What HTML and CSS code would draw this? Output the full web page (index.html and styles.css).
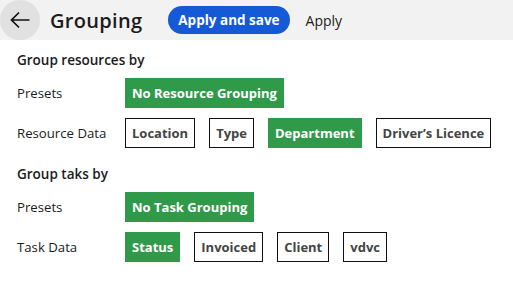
FILE: index.html
```html
<!DOCTYPE html>
<html lang="en">
<head>
  <meta charset="UTF-8">
  <title>Grouping</title>
  <link rel="stylesheet" href="styles.css">
</head>
<body>
  <div class="header">
    <button class="back" aria-label="Back">
      <svg width="22" height="22" viewBox="0 0 22 22">
        <path d="M20.5 11H2.5M10 3.5L2.5 11l7.5 7.5" fill="none" stroke="#111" stroke-width="1.7"/>
      </svg>
    </button>
    <h1>Grouping</h1>
    <button class="btn-primary">Apply and save</button>
    <button class="btn-text">Apply</button>
  </div>

  <div class="content">
    <div class="section">
      <h2>Group resources by</h2>
      <div class="row">
        <div class="row-label">Presets</div>
        <div class="chips">
          <span class="chip active">No Resource Grouping</span>
        </div>
      </div>
      <div class="row">
        <div class="row-label">Resource Data</div>
        <div class="chips">
          <span class="chip">Location</span>
          <span class="chip">Type</span>
          <span class="chip active">Department</span>
          <span class="chip">Driver’s Licence</span>
        </div>
      </div>
    </div>

    <div class="section">
      <h2>Group taks by</h2>
      <div class="row">
        <div class="row-label">Presets</div>
        <div class="chips">
          <span class="chip active">No Task Grouping</span>
        </div>
      </div>
      <div class="row">
        <div class="row-label">Task Data</div>
        <div class="chips">
          <span class="chip active">Status</span>
          <span class="chip">Invoiced</span>
          <span class="chip">Client</span>
          <span class="chip">vdvc</span>
        </div>
      </div>
    </div>
  </div>
</body>
</html>
```

FILE: styles.css
```css
:root {
  --header-bg: #f2f2f2;
  --circle-bg: #e1e1e1;
  --blue: #1559d6;
  --green: #2f9a49;
  --text-color: #1b1b1b;
  --chip-text: #444444;
}

body {
  margin: 0;
  font-family: 'Open Sans', 'Noto Sans', sans-serif;
  color: var(--text-color);
  background: #ffffff;
}

.header {
  height: 40px;
  background: var(--header-bg);
  display: flex;
  align-items: center;
}

.back {
  width: 40px;
  height: 40px;
  border: none;
  border-radius: 50%;
  background: var(--circle-bg);
  padding: 0;
  display: flex;
  align-items: center;
  justify-content: center;
}

.header h1 {
  font-size: 20px;
  font-weight: 600;
  margin: 0 0 0 10px;
  letter-spacing: 0.3px;
}

.btn-primary {
  margin-left: 26px;
  height: 28px;
  padding: 0 10px;
  border: none;
  border-radius: 14px;
  background: var(--blue);
  color: #ffffff;
  font-family: inherit;
  font-size: 13.5px;
  font-weight: 700;
}

.btn-text {
  margin-left: 6px;
  height: 28px;
  padding: 0 10px;
  border: none;
  background: none;
  color: var(--text-color);
  font-family: inherit;
  font-size: 14px;
}

.content {
  padding: 10px 17px;
}

.section + .section {
  margin-top: 16px;
}

.section h2 {
  font-size: 13.5px;
  font-weight: 600;
  line-height: 20px;
  margin: 0 0 8px 0;
}

.row {
  display: flex;
  align-items: center;
  margin-bottom: 10px;
}

.row-label {
  width: 108px;
  flex-shrink: 0;
  font-size: 13.2px;
}

.chips {
  display: flex;
  gap: 14px;
}

.chip {
  height: 30px;
  flex-shrink: 0;
  box-sizing: border-box;
  padding: 0 6px;
  display: inline-flex;
  align-items: center;
  white-space: nowrap;
  border: 1px solid #111111;
  color: var(--chip-text);
  font-size: 13px;
  font-weight: 700;
}

.chip.active {
  background: var(--green);
  border-color: var(--green);
  color: #ffffff;
}
```
